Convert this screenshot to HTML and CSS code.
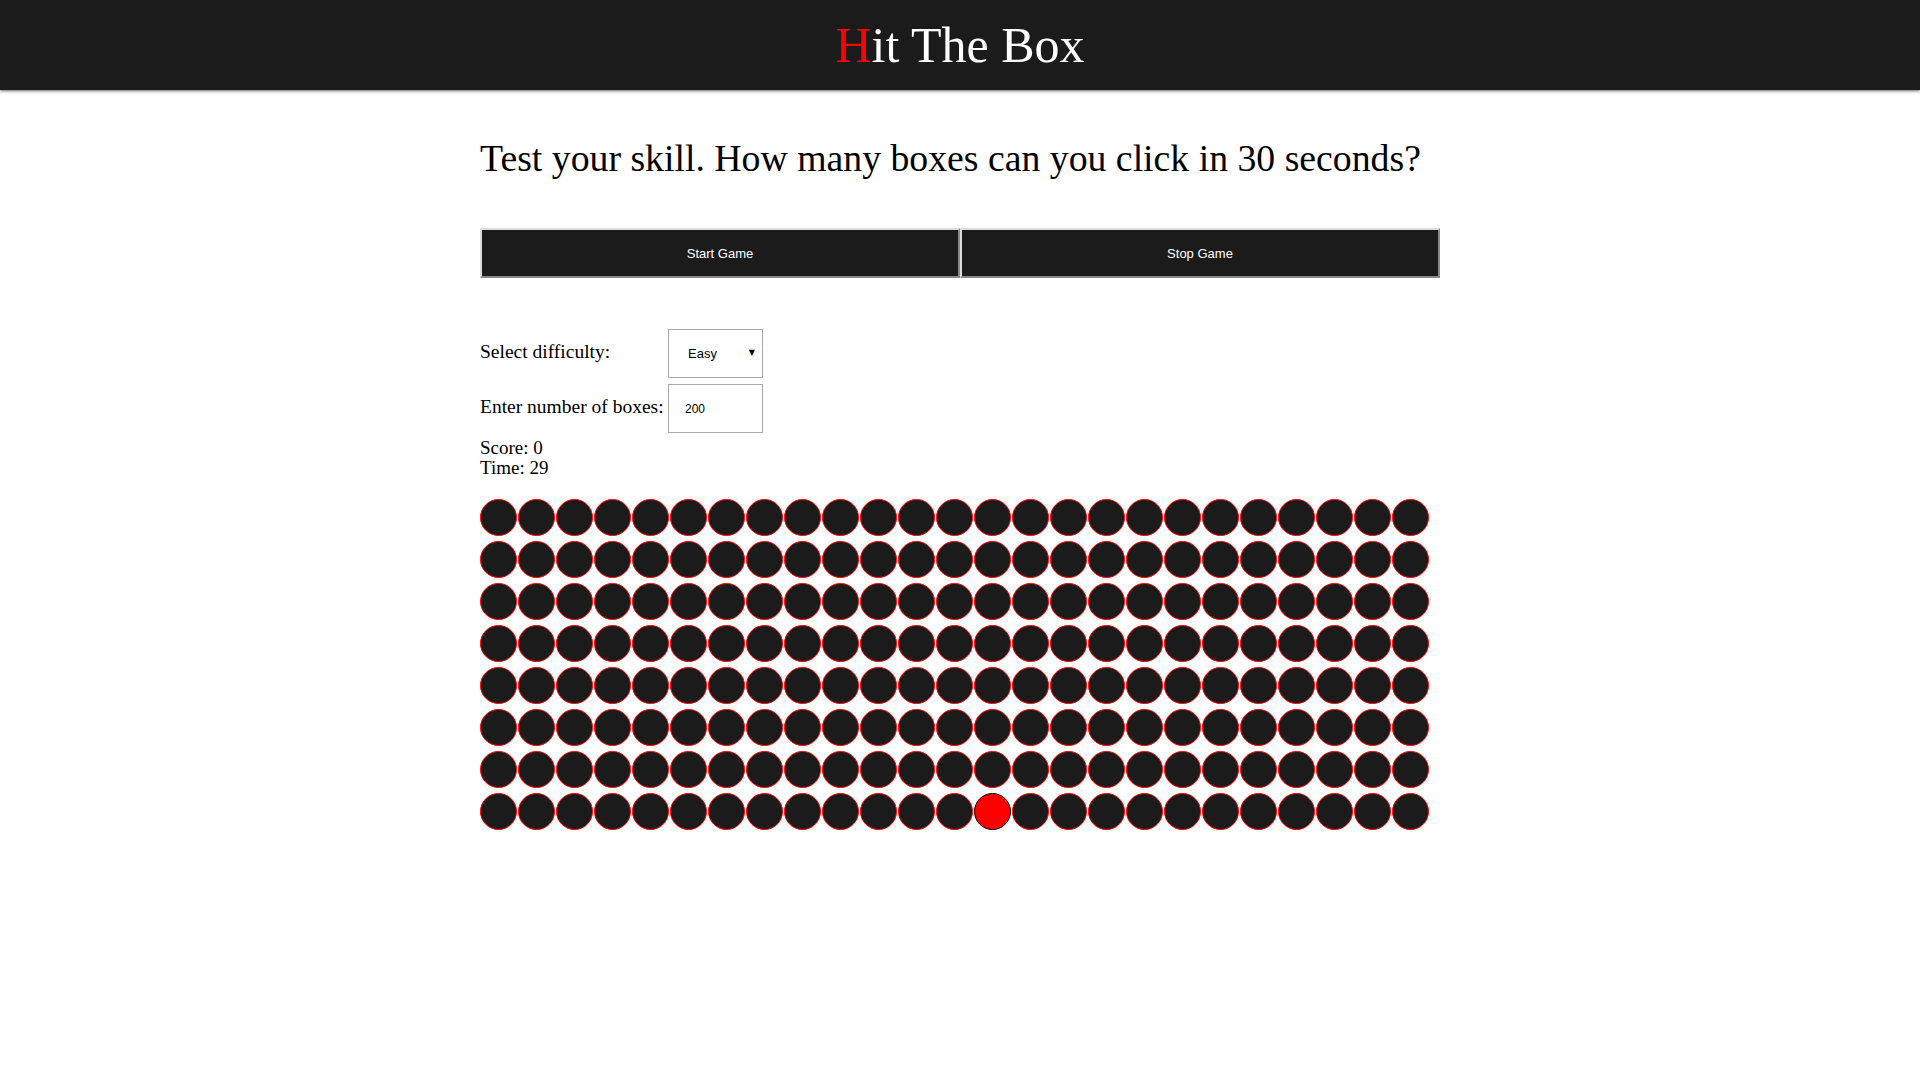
FILE: index.html
```html
<!DOCTYPE html>
<html>
<head>
<meta charset="utf-8">
<title>Hit The Box</title>
<link rel="stylesheet" href="styles.css">
</head>
<body>
<header class="topbar">
  <h1 class="logo"><span class="logo-h">H</span>it The Box</h1>
</header>
<main class="container">
  <h2 class="intro">Test your skill. How many boxes can you click in 30 seconds?</h2>
  <div class="buttons">
    <button class="btn">Start Game</button>
    <button class="btn">Stop Game</button>
  </div>
  <div class="form">
    <label class="label">Select difficulty:</label>
    <span class="select-wrap">
      <select class="select"><option>Easy</option><option>Medium</option><option>Hard</option></select>
    </span>
    <label class="label">Enter number of boxes:</label>
    <input class="input" type="text" value="200">
  </div>
  <div class="stats">
    <div>Score: 0</div>
    <div>Time: 29</div>
  </div>
  <div class="board" id="board"></div>
</main>
<script src="app.js"></script>
</body>
</html>
```
FILE: styles.css
```css
html, body {
  margin: 0;
  padding: 0;
  background: #ffffff;
}
body {
  font-family: "Liberation Serif", "Times New Roman", serif;
  color: #000;
}
.topbar {
  height: 90px;
  background: #1b1b1b;
  box-shadow: 0 1px 3px rgba(0, 0, 0, 0.6);
  display: flex;
  align-items: center;
  justify-content: center;
}
.logo {
  margin: 0;
  font-weight: normal;
  font-size: 50px;
  line-height: 58px;
  color: #ffffff;
}
.logo-h {
  color: #ff0000;
}
.container {
  width: 960px;
  margin: 0 auto;
}
.intro {
  margin: 46px 0 0 0;
  font-weight: normal;
  font-size: 37.75px;
  line-height: 44px;
}
.buttons {
  display: flex;
  margin-top: 48px;
}
.btn {
  flex: 1;
  height: 50px;
  background: #1b1b1b;
  color: #ffffff;
  font-family: "Liberation Sans", Arial, sans-serif;
  font-size: 13px;
  border-width: 2px;
  border-style: solid;
  border-color: #dcdcdc #8a8a8a #8a8a8a #dcdcdc;
  padding: 0;
  margin: 0;
}
.form {
  display: grid;
  grid-template-columns: 188px 95px;
  row-gap: 6px;
  align-items: center;
  margin-top: 51px;
  font-size: 19.5px;
}
.label {
  padding-bottom: 3px;
}
.select-wrap {
  position: relative;
  display: block;
  width: 95px;
  height: 49px;
}
.select-wrap::after {
  content: "\25BC";
  position: absolute;
  right: 8px;
  top: 19px;
  font-family: "DejaVu Sans", sans-serif;
  font-size: 8px;
  color: #000;
  pointer-events: none;
}
.select {
  appearance: none;
  -webkit-appearance: none;
  width: 95px;
  height: 49px;
  box-sizing: border-box;
  border: 1px solid #a9a9a9;
  background: #fff;
  padding: 0 0 0 19px;
  font-family: "Liberation Sans", Arial, sans-serif;
  font-size: 13px;
  color: #000;
  border-radius: 0;
}
.input {
  width: 95px;
  height: 49px;
  box-sizing: border-box;
  border: 1px solid #a9a9a9;
  padding: 0 0 0 16px;
  font-family: "Liberation Sans", Arial, sans-serif;
  font-size: 12px;
  color: #000;
  margin: 0;
}
.stats {
  margin-top: 5px;
  font-size: 19px;
  line-height: 20px;
}
.board {
  display: grid;
  grid-template-columns: repeat(25, 37px);
  column-gap: 1px;
  row-gap: 5px;
  margin-top: 21px;
}
.box {
  width: 35px;
  height: 35px;
  border: 1px solid #ff0000;
  border-radius: 50%;
  background: #1b1b1b;
}
.box.hit {
  background: #ff0000;
  border-color: #000;
}
```
FILE: app.js
```js
(function () {
  var board = document.getElementById('board');
  for (var i = 0; i < 200; i++) {
    var d = document.createElement('div');
    d.className = 'box' + (i === 188 ? ' hit' : '');
    board.appendChild(d);
  }
})();
```
